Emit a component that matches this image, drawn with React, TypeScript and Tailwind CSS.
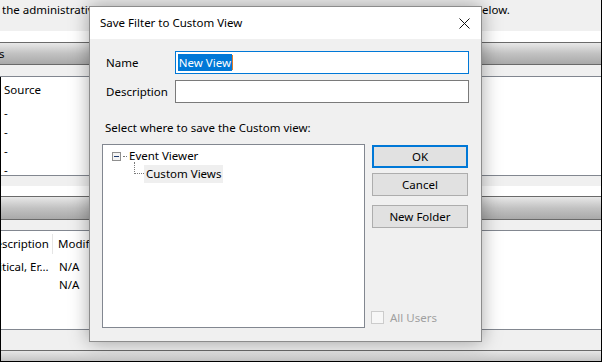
import React from "react";

const font = "font-['Segoe_UI','Noto_Sans',sans-serif]";

const HeaderBar = () => (
  <div className="h-[24px] border-y border-[#6a6a6a] bg-gradient-to-b from-[#e8e8e8] via-[#c2c2c2] to-[#a9a9a9]" />
);

const SaveFilterDialog = () => (
  <div className="absolute left-[89px] top-[6px] w-[393px] h-[336px] border border-[#8c8c8c] bg-[#f0f0f0] flex flex-col shadow-[0_0_18px_rgba(0,0,0,0.35)]">
    {/* Title bar */}
    <div className="h-[32px] bg-white flex items-center justify-between pl-[10px] pr-[10px] shrink-0">
      <span className="text-[11.5px] text-black">Save Filter to Custom View</span>
      <svg width="11" height="11" viewBox="0 0 11 11" className="mr-[1px]">
        <path d="M0.5 0.5 L10.5 10.5 M10.5 0.5 L0.5 10.5" stroke="#111" strokeWidth="1" />
      </svg>
    </div>

    <div className="flex-1 flex flex-col pt-[12px] pl-[12px] pr-[12px] pb-[13px]">
      {/* Name */}
      <div className="flex items-center h-[23px]">
        <span className="w-[73px] pl-[4px] text-[11.5px] text-black">Name</span>
        <div className="w-[295px] h-[23px] border border-[#0078d7] bg-white flex items-center pl-[2px]">
          <span className="bg-[#0078d7] text-white text-[11.5px] leading-[17px] px-px">New View</span>
          <span className="w-px h-[15px] bg-[#e07b2a]" />
        </div>
      </div>
      {/* Description */}
      <div className="flex items-center h-[23px] mt-[6px]">
        <span className="w-[73px] pl-[4px] text-[11.5px] text-black">Description</span>
        <div className="w-[295px] h-[23px] border border-[#7a7a7a] bg-white" />
      </div>

      <div className="mt-[17px] pl-[3px] h-[16px] leading-[16px] text-[11.5px] text-black">
        Select where to save the Custom view:
      </div>

      <div className="mt-[8px] flex flex-1 gap-[7px]">
        {/* Tree */}
        <div className="w-[263px] border border-[#828790] bg-white pt-[6px] pl-[9px]">
          <div className="flex items-center h-[10px]">
            <div className="w-[9px] h-[9px] border border-[#8f8f8f] bg-[#f4f4f4] flex items-center justify-center">
              <div className="w-[5px] h-px bg-[#1e3a6e]" />
            </div>
            <div className="w-[4px] ml-[2px] border-t border-dotted border-[#7a7a7a]" />
            <span className="ml-[2px] text-[11.5px] leading-[16px] text-black">Event Viewer</span>
          </div>
          <div className="flex ml-[22px] mt-px">
            <div className="w-[10px] h-[12px] border-l border-b border-dotted border-[#7a7a7a]" />
            <div className="mt-[3px] bg-[#efefef] h-[18px] px-[2px] leading-[18px] text-[11.5px] text-black">
              Custom Views
            </div>
          </div>
        </div>

        {/* Buttons */}
        <div className="w-[96px] flex flex-col mt-px">
          <button className="h-[23px] border-2 border-[#0078d7] bg-[#e1e1e1] text-[11.5px] text-black">OK</button>
          <button className="h-[23px] mt-[5px] border border-[#adadad] bg-[#e1e1e1] text-[11.5px] text-black">Cancel</button>
          <button className="h-[23px] mt-[9px] border border-[#adadad] bg-[#e1e1e1] text-[11.5px] text-black">New Folder</button>
          <div className="mt-auto mb-[2px] flex items-center gap-[6px] -ml-px">
            <div className="w-[13px] h-[13px] border border-[#cccccc] bg-[#f7f7f7]" />
            <span className="text-[11.5px] text-[#a0a0a0]">All Users</span>
          </div>
        </div>
      </div>
    </div>
  </div>
);

export default function App() {
  return (
    <div className={`${font} relative w-[602px] h-[362px] overflow-hidden bg-white border-r border-b border-black flex flex-col`}>
      {/* Intro text */}
      <div className="h-[31px] bg-[#f0f0f0] pl-[2px] pt-[2px]">
        <div className="flex text-[11.5px] leading-[16px] text-black">
          <span className="w-[473px] overflow-hidden whitespace-nowrap">
            the administrative user, a member of the appropriate group, can read events of all the logs in the table
          </span>
          <span className="whitespace-nowrap">below.</span>
        </div>
      </div>
      <div className="h-[11px] bg-white" />
      <div className="h-[23px] border-y border-[#6a6a6a] bg-gradient-to-b from-[#e8e8e8] via-[#c2c2c2] to-[#a9a9a9] flex items-center text-[11.5px] text-black -ml-[1px]">
        s
      </div>
      <div className="h-[12px] bg-[#f0f0f0] border-b border-[#828790]" />

      <div className="flex-1 flex flex-col border-l border-black">
        {/* Logs list */}
        <div className="h-[98px] pt-[3px] pl-[3px] text-[11.5px] text-black">
          <div className="leading-[19px]">Source</div>
          <div className="mt-[4px] leading-[19px]">-</div>
          <div className="leading-[19px]">-</div>
          <div className="leading-[19px]">-</div>
          <div className="leading-[19px]">-</div>
        </div>
        <div className="h-[21px] border-t border-[#828790] flex flex-col">
          <div className="h-[10px] bg-[#f0f0f0]" />
          <div className="flex-1 bg-white" />
        </div>
        <HeaderBar />
        <div className="h-[11px] bg-[#f0f0f0] border-b border-[#828790]" />

        {/* Filters table */}
        <div className="h-[98px] text-[11.5px] text-black">
          <div className="flex h-[22px] mt-[2px] items-center">
            <div className="w-[51px] overflow-hidden whitespace-nowrap">
              <span className="-ml-[14px] inline-block">Description</span>
            </div>
            <div className="w-px h-[20px] bg-[#e5e5e5]" />
            <span className="ml-[5px]">Modified</span>
          </div>
          <div className="flex mt-[3px] leading-[18px]">
            <div className="w-[58px] overflow-hidden whitespace-nowrap">
              <span className="-ml-[14px] inline-block">Critical, Er...</span>
            </div>
            <span>N/A</span>
          </div>
          <div className="flex leading-[18px]">
            <div className="w-[58px]" />
            <span>N/A</span>
          </div>
        </div>
        <div className="h-[21px] border-t border-[#828790] bg-[#f0f0f0]" />
        <div className="flex-1 border-t border-[#6a6a6a] bg-gradient-to-b from-[#e6e6e6] to-[#c4c4c4]" />
      </div>

      <SaveFilterDialog />
    </div>
  );
}
